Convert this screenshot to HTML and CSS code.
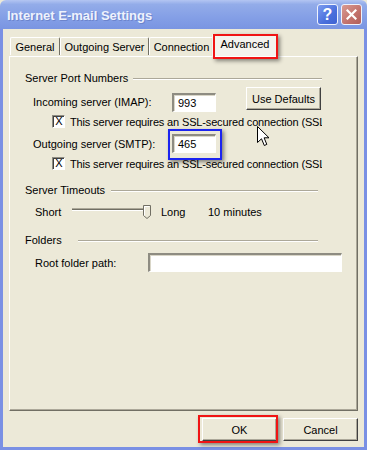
FILE: index.html
```html
<!DOCTYPE html>
<html lang="en">
<head>
    <meta charset="UTF-8">
    <title>Internet E-mail Settings</title>
    <link rel="stylesheet" href="styles.css">
</head>
<body>

    <div class="window">
        <div class="titlebar">
            <span class="title">Internet E-mail Settings</span>
            <div class="title-buttons">
                <span class="tb-btn help">?</span>
                <span class="tb-btn close">
                    <svg width="11" height="11" viewBox="0 0 11 11">
                        <path d="M1.5 1.5 L9.5 9.5 M9.5 1.5 L1.5 9.5" stroke="#fff" stroke-width="2.2" stroke-linecap="square"/>
                    </svg>
                </span>
            </div>
        </div>

        <div class="client">
            <div class="tabs">
                <div class="tab tab-general">General</div>
                <div class="tab tab-outgoing">Outgoing Server</div>
                <div class="tab tab-connection">Connection</div>
                <div class="tab tab-advanced active marked red">Advanced</div>
            </div>

            <div class="panel">
                <div class="group-title">
                    <span class="gt-text w-ports">Server Port Numbers</span>
                    <span class="rule"></span>
                </div>

                <div class="row row-incoming">
                    <span class="row-label">Incoming server (IMAP):</span>
                    <span class="field port">993</span>
                    <button class="btn btn-defaults">Use Defaults</button>
                </div>
                <div class="check">
                    <span class="box">X</span>
                    <span class="check-text">This server requires an SSL-secured connection (SSL)</span>
                </div>

                <div class="row row-outgoing">
                    <span class="row-label">Outgoing server (SMTP):</span>
                    <span class="marked blue"><span class="field port">465</span></span>
                </div>
                <div class="check check-second">
                    <span class="box">X</span>
                    <span class="check-text">This server requires an SSL-secured connection (SSL)</span>
                </div>

                <div class="group-title gt-timeouts">
                    <span class="gt-text w-timeouts">Server Timeouts</span>
                    <span class="rule"></span>
                </div>
                <div class="row row-slider">
                    <span class="slider-label">Short</span>
                    <svg class="slider" width="82" height="15" viewBox="0 0 82 15">
                        <rect x="2" y="4" width="74" height="1" fill="#aca899"/>
                        <rect x="2" y="5" width="74" height="1" fill="#716f64"/>
                        <rect x="2" y="6" width="74" height="1" fill="#ffffff"/>
                        <path d="M73.5 1.5 H80.5 V11.5 L77 14.5 L73.5 11.5 Z" fill="#ece9d8" stroke="#716f64"/>
                        <path d="M74.5 11.5 V2.5 H79.5" fill="none" stroke="#fff"/>
                    </svg>
                    <span class="slider-long">Long</span>
                    <span>10 minutes</span>
                </div>

                <div class="group-title gt-folders">
                    <span class="gt-text w-folders">Folders</span>
                    <span class="rule"></span>
                </div>
                <div class="row row-root">
                    <span class="row-label short">Root folder path:</span>
                    <span class="field path"></span>
                </div>
            </div>

            <div class="actions">
                <span class="marked red ok-mark"><button class="btn">OK</button></span>
                <button class="btn">Cancel</button>
            </div>
        </div>
    </div>

    <svg class="cursor" width="14" height="22" viewBox="0 0 14 22">
        <path d="M0.5 0.5 L0.5 16.5 L4.5 12.8 L7.3 19.5 L9.8 18.4 L7.1 11.8 L12 11.8 Z" fill="#fff" stroke="#000" stroke-linejoin="round"/>
    </svg>

</body>
</html>
```

FILE: styles.css
```css
body {
    margin: 0;
    width: 367px;
    height: 450px;
    font-family: "Liberation Sans", Arial, sans-serif;
    font-size: 11px;
    color: #000;
    background: #ece9d8;
    position: relative;
    overflow: hidden;
}
.window {
    width: 367px;
    height: 450px;
    display: flex;
    flex-direction: column;
}
.titlebar {
    height: 29px;
    display: flex;
    align-items: center;
    justify-content: space-between;
    padding: 0 5px 0 7px;
    background: linear-gradient(#b3c5f2, #93ace9 15%, #849fe6 60%, #7a95e2);
    border-radius: 6px 6px 0 0;
}
.title {
    font-weight: bold;
    font-size: 13px;
    color: #eef2fd;
    text-shadow: 1px 1px 0 #6c84cc;
    padding-top: 1px;
}
.title-buttons { display: flex; gap: 3px; }
.tb-btn {
    width: 19px;
    height: 19px;
    border: 1px solid #eef2fd;
    border-radius: 3px;
    display: flex;
    align-items: center;
    justify-content: center;
    color: #fff;
    font-weight: bold;
    font-size: 16px;
}
.help { background: linear-gradient(135deg, #7d9cf0, #4a6fdc 60%, #3f63d2); }
.close { background: linear-gradient(135deg, #d99a92, #c2716b 60%, #b05e5a); }

.client {
    flex: 1;
    border: 3px solid #7a90e4;
    border-top: none;
    background: #ece9d8;
    display: flex;
    flex-direction: column;
}

.tabs {
    display: flex;
    align-items: flex-end;
    height: 27px;
    margin-left: 7px;
    position: relative;
    z-index: 1;
}
.tab {
    height: 18px;
    line-height: 18px;
    text-align: center;
    box-sizing: border-box;
    border-top: 1px solid #fff;
    border-left: 1px solid #fff;
    border-right: 1px solid #716f64;
    border-radius: 2px 2px 0 0;
    background: #ece9d8;
    margin-bottom: 1px;
}
.tab-general { width: 50px; }
.tab-outgoing { width: 89px; }
.tab-connection { width: 65px; }
.tab-advanced {
    width: 66px;
    margin-left: -2px;
    height: 22px;
    line-height: 19px;
    margin-bottom: 0;
    background: #f4f3ee;
}

.panel {
    margin: 0 6px 0 6px;
    height: 355px;
    box-sizing: border-box;
    border-top: 1px solid #fff;
    border-left: 1px solid #fff;
    border-right: 1px solid #716f64;
    border-bottom: 1px solid #716f64;
    box-shadow: inset -1px -1px 0 #aca899;
    display: flex;
    flex-direction: column;
}

.group-title {
    display: flex;
    align-items: center;
    margin: 15px 35px 0 15px;
    line-height: 13px;
}
.gt-text { flex: none; }
.w-ports { width: 108px; }
.w-timeouts { width: 86px; }
.w-folders { width: 53px; }
.rule {
    flex: 1;
    border-top: 1px solid #aca899;
    border-bottom: 1px solid #fff;
}
.gt-timeouts { margin-top: 14px; margin-right: 39px; }
.gt-folders { margin-top: 15px; margin-right: 39px; }

.row {
    display: flex;
    align-items: center;
    margin-left: 23px;
}
.row-label { width: 139px; flex: none; }
.row-label.short { width: 113px; }
.row-incoming { margin-top: 2px; height: 23px; align-items: flex-start; }
.row-incoming .row-label { margin-top: 9px; }
.row-incoming .field { margin-top: 6px; }
.row-outgoing { margin-top: 6px; height: 19px; }
.row-slider { margin-top: 7px; height: 15px; margin-left: 25px; }
.row-root { margin-top: 6px; height: 19px; margin-left: 25px; }

.field {
    display: block;
    box-sizing: border-box;
    height: 19px;
    background: #fff;
    border-style: solid;
    border-width: 2px 1px 1px 2px;
    border-color: #8e8c82 #fff #fff #8e8c82;
    box-shadow: inset 1px 1px 0 #d9d6c8;
    padding: 2px 0 0 4px;
    line-height: 13px;
}
.port { width: 44px; }
.path { width: 194px; }

.btn {
    font-family: "Liberation Sans", Arial, sans-serif;
    font-size: 11px;
    color: #000;
    width: 75px;
    height: 23px;
    padding: 0;
    background: #ece9d8;
    border-style: solid;
    border-width: 1px;
    border-color: #fff #404040 #404040 #fff;
    box-shadow: inset -1px -1px 0 #aca899;
}
.btn-defaults { margin-left: 30px; }

.check {
    display: flex;
    align-items: center;
    margin: 5px 0 0 42px;
    width: 270px;
    overflow: hidden;
    white-space: nowrap;
    height: 13px;
}
.check-second { margin-top: 4px; }
.check-text { letter-spacing: -0.15px; }
.box {
    flex: none;
    width: 13px;
    height: 13px;
    box-sizing: border-box;
    background: #fff;
    border-style: solid;
    border-width: 1px;
    border-color: #8e8c82 #fff #fff #8e8c82;
    box-shadow: inset 1px 1px 0 #404040;
    font-size: 11px;
    line-height: 11px;
    text-align: center;
    padding-left: 1px;
    margin-right: 5px;
}

.slider-label { width: 35px; }
.slider { display: block; flex: none; }
.slider-long { margin-left: 9px; width: 47px; }

.actions {
    display: flex;
    justify-content: flex-end;
    gap: 6px;
    margin: 7px 6px 0 0;
}

.marked { position: relative; display: inline-block; }
.marked::after {
    content: "";
    position: absolute;
    pointer-events: none;
    box-shadow: 2px 2px 4px rgba(0, 0, 0, 0.45);
}
.red::after { border: 2px solid #f01414; }
.blue::after { border: 2px solid #1c24f0; }
.tab-advanced::after { top: -1px; left: 0; right: -1px; bottom: -3px; }
.row-outgoing .marked::after { top: -5px; left: -4px; right: -6px; bottom: -7px; }
.ok-mark { display: flex; }
.ok-mark::after { top: -3px; left: -4px; right: -1px; bottom: -2px; }

.cursor {
    position: absolute;
    left: 257px;
    top: 126px;
}
```
